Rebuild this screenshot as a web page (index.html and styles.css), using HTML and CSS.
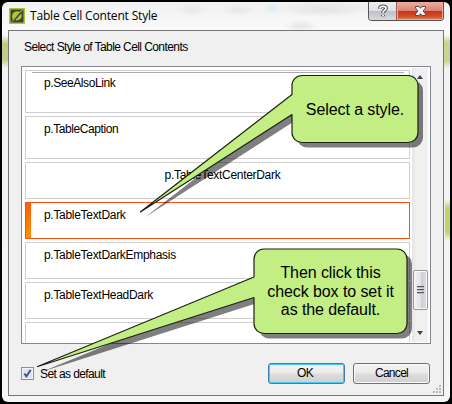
FILE: index.html
```html
<!DOCTYPE html>
<html lang="en">
<head>
<meta charset="utf-8">
<title>Table Cell Content Style</title>
<link rel="stylesheet" href="styles.css">
</head>
<body>
<div class="window">
  <header class="titlebar">
    <svg class="app-icon" width="16" height="16" viewBox="0 0 16 16">
      <rect x="0.75" y="0.75" width="14.5" height="14.5" fill="#3d4341" stroke="#b3c62d" stroke-width="1.5"/>
      <path d="M3.4 10.500C2 6 5.200 2.800 9.600 3.400L11 4 4.600 11.800Z" fill="#b3c62d"/>
      <path d="M12.300 5.500C13.800 9.800 10.500 13 6.200 12.300Z" fill="#b3c62d"/>
      <path d="M3 13.500L13.200 2" stroke="#c6d84a" stroke-width="1"/>
      <path d="M5.500 11.200L11.500 4.700" stroke="#3d4341" stroke-width="1"/>
    </svg>
    <h1 class="title">Table Cell Content Style</h1>
    <div class="caption-buttons">
      <button class="help" aria-label="Help"><svg width="12" height="14" viewBox="0 0 12 14"><path d="M3 4.700V4C3 1.700 9 1.700 9 4.300C9 6.400 6 6.400 6 9M6 10.700V12.200" fill="none" stroke="#4c4f5d" stroke-width="3.800"/><path d="M3 4.500V4C3 1.700 9 1.700 9 4.300C9 6.400 6 6.400 6 8.700M6 10.900V12" fill="none" stroke="#fff" stroke-width="1.800"/></svg></button>
      <button class="close" aria-label="Close"><svg width="13" height="12" viewBox="0 0 13 12"><path d="M1.500 1.500H5L6.500 3.300 8 1.500H11.500V3L9 6 11.500 9V10.500H8L6.500 8.700 5 10.500H1.500V9L4 6 1.500 3Z" fill="#f4f4f4" stroke="#5b4a55"/></svg></button>
    </div>
  </header>
  <main class="panel">
    <h2 class="heading">Select Style of Table Cell Contents</h2>
    <div class="listbox">
      <ul class="styles">
        <li class="tall first"><span>p.SeeAlsoLink</span></li>
        <li class="tall"><span>p.TableCaption</span></li>
        <li class="centered"><span>p.TableTextCenterDark</span></li>
        <li class="selected"><span>p.TableTextDark</span></li>
        <li><span>p.TableTextDarkEmphasis</span></li>
        <li><span>p.TableTextHeadDark</span></li>
        <li class="clipped"></li>
      </ul>
      <div class="scrollbar">
        <i class="arrow up"></i>
        <div class="thumb"><i></i><i></i><i></i></div>
        <i class="arrow down"></i>
      </div>
    </div>
    <footer class="actions">
      <label class="check"><span class="box"><svg width="9" height="9" viewBox="0 0 9 9"><path d="M1.300 4.500L3.400 7.300 7.600 1" fill="none" stroke="#3b4f91" stroke-width="1.900"/></svg></span><span class="check-text">Set as default</span></label>
      <button class="btn ok">OK</button>
      <button class="btn cancel">Cancel</button>
    </footer>
    <svg class="grip" width="8" height="8" viewBox="0 0 8 8"><path d="M6 0h2v2h-2zM3 3h2v2h-2zM6 3h2v2h-2zM0 6h2v2h-2zM3 6h2v2h-2zM6 6h2v2h-2z" fill="#b8b8b8"/></svg>
  </main>
</div>
<svg class="callout-shapes" width="452" height="404" viewBox="0 0 452 404">
  <defs>
    <path id="select" d="M302 75.500H408A10 10 0 0 1 418 85.500V132.500A10 10 0 0 1 408 142.500H302A10 10 0 0 1 292 132.500V114.500L140 212.300 292 94.500V85.500A10 10 0 0 1 302 75.500Z"/>
    <path id="check" d="M264 249H397A10 10 0 0 1 407 259V323.500A10 10 0 0 1 397 333.500H264A10 10 0 0 1 254 323.500V297.500L37 366.700 254 277V259A10 10 0 0 1 264 249Z"/>
  </defs>
  <g fill="#000" fill-opacity=".5"><use href="#select" x="5" y="5"/><use href="#check" x="5" y="5"/></g>
  <g fill="#c2ee84" stroke="#1c2214" stroke-width="1.200" stroke-linejoin="bevel"><use href="#select"/><use href="#check"/></g>
</svg>
<p class="note note-select">Select a style.</p>
<p class="note note-check">Then click this<br>check box to set it<br>as the default.</p>
</body>
</html>
```

FILE: styles.css
```css
* { box-sizing: border-box; }
body {
  margin: 0;
  width: 452px;
  height: 404px;
  overflow: hidden;
  position: relative;
  background: #000;
  font: 12px/13px "Liberation Sans", Arial, sans-serif;
  color: #000;
}
h1, h2, ul, p { margin: 0; padding: 0; font-weight: normal; }
button { padding: 0; font: inherit; color: inherit; }
.window {
  width: 448px;
  height: 400px;
  margin: 2px;
  padding: 0 6px;
  border-radius: 6px;
  background:
    radial-gradient(ellipse 18px 6px at 190px 8px, #e6e6e6, transparent),
    radial-gradient(ellipse 18px 6px at 236px 8px, #e6e6e6, transparent),
    radial-gradient(ellipse 10px 6px at 270px 6px, #dcebf3, transparent),
    radial-gradient(ellipse 50px 8px at 322px 7px, #e2e2e2, transparent),
    radial-gradient(ellipse 18px 6px at 299px 24px, #e4e4e4, transparent),
    linear-gradient(transparent 33px, #c8d68d 40px 59px, transparent 66px) right / 6px 100% no-repeat,
    linear-gradient(transparent 33px, #bdcc87 42px 57px, transparent 66px) left / 6px 100% no-repeat,
    linear-gradient(transparent 198px, #c3d169 206px 230px, transparent 239px) right / 5px 100% no-repeat,
    linear-gradient(#f1f1f1, #fafafa 28px, #f2f2f2 45px, #f5f5f5);
}
.titlebar { height: 28px; display: flex; align-items: flex-start; padding-left: 1px; }
.app-icon { margin-top: 6px; }
.title {
  margin: 6px 0 0 5px;
  font: 12px/16px "Open Sans", sans-serif;
  letter-spacing: -.17px;
  white-space: nowrap;
}
.caption-buttons {
  margin: 0 0 0 auto;
  display: flex;
  width: 76px;
  height: 19px;
  border: 1px solid #555;
  border-top: 0;
  border-radius: 0 0 4px 4px;
  overflow: hidden;
}
.caption-buttons button { border: 0; display: flex; align-items: center; justify-content: center; }
.help { width: 28px; border-right: 1px solid #9c5b53 !important; background: linear-gradient(#eee, #e0e1e3 50%, #bdc1c7 52%, #d8dadd); }
.close { flex: 1; background: linear-gradient(#e9b1a3, #dc8270 48%, #c6351c 52%, #cf4e2d 80%, #e58b66); box-shadow: inset 0 0 0 1px #f0a696; }
.panel {
  position: relative;
  height: 366px;
  border: 1px solid #777;
  background: #f0f0f0;
  padding: 9px 12px 0;
}
.heading { height: 26px; padding: 1px 0 0 3px; font-size: 12px; line-height: 13px; letter-spacing: -.58px; white-space: nowrap; }
.listbox {
  height: 278px;
  width: 410px;
  border: 1px solid #828790;
  background: #fff;
  display: flex;
  justify-content: space-between;
  padding: 1px 2px 1px 3px;
  overflow: hidden;
}
.styles { list-style: none; width: 385px; padding-top: 2px; display: flex; flex-direction: column; gap: 3px; }
.styles li {
  flex: none;
  height: 37px;
  border: 1px solid #cfcfcf;
  padding: 6px 0 0 18px;
  background: #fff;
  letter-spacing: -.3px;
  white-space: nowrap;
}
.styles .tall { height: 43px; letter-spacing: -.42px; }
.styles .first { background: linear-gradient(#aaa, #aaa) 6px 1px / 372px 1px no-repeat #fff; }
.styles .centered { padding-left: 10px; text-align: center; }
.styles .selected { border-color: #ff4e0d; background: linear-gradient(#ff5c05, #ff9100) 0 0 / 5px 100% no-repeat #fff; }
.styles .clipped { height: 20px; border-bottom: 0; }
.scrollbar { width: 16px; background: linear-gradient(90deg, #e4e4e4, #f0f0f0 4px); display: flex; flex-direction: column; align-items: center; }
.arrow { width: 0; height: 0; border: 3.5px solid transparent; }
.up { border-top: 0; border-bottom: 4px solid #404040; margin-top: 7px; }
.down { border-bottom: 0; border-top: 4px solid #404040; margin: auto 0 7px; }
.thumb {
  margin-top: 191px;
  width: 15px;
  height: 40px;
  border: 1px solid #979797;
  border-radius: 2px;
  box-shadow: inset 0 0 0 1px #fafafa;
  background: linear-gradient(90deg, #f3f3f3, #e3e3e5 50%, #cbccd0 52%, #dedee0);
  display: flex;
  flex-direction: column;
  align-items: center;
  justify-content: center;
  gap: 1px;
}
.thumb i { width: 7px; height: 2px; background: linear-gradient(#555 50%, #bbb 50%); }
.actions { display: flex; height: 60px; padding-top: 19px; gap: 8px; }
.check { display: flex; width: 239px; padding-top: 4px; }
.box { width: 13px; height: 13px; border: 1px solid #8e8f8f; background: #dde3ec; box-shadow: inset 0 0 0 1px #f4f4f4; display: flex; align-items: center; justify-content: center; }
.check-text { margin: 1px 0 0 6px; letter-spacing: -.6px; }
.btn { width: 77px; height: 21px; border: 1px solid #707070; border-radius: 3px; background: linear-gradient(#f3f3f3, #ebebeb 49%, #dddddd 51%, #d0d0d0); box-shadow: inset 0 0 0 1px #fafafa; line-height: 19px; letter-spacing: -.7px; }
.ok { border-color: #3c7fb1; box-shadow: inset 0 0 0 1px #48cbf3; padding-right: 3px; }
.grip { position: absolute; right: 2px; bottom: 2px; }
.callout-shapes { position: absolute; left: 0; top: 0; }
.note { position: absolute; font-size: 16px; line-height: 18.6px; letter-spacing: -.08px; text-align: center; white-space: nowrap; }
.note-select { left: 292px; top: 101px; width: 126px; }
.note-check { left: 254px; top: 264px; width: 153px; }
```
